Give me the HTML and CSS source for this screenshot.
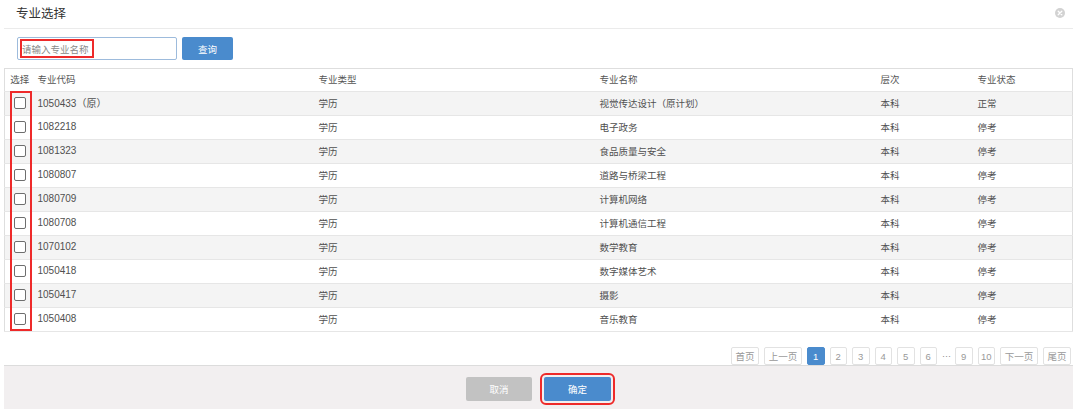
FILE: index.html
```html
<!DOCTYPE html>
<html>
  <head>
    <meta charset="UTF-8">
    <title>专业选择</title>
    <link rel="stylesheet" href="styles.css">
  </head>
  <body>
    <div class="dialog">
      <div class="dialog-header">
        <span class="dialog-title">专业选择</span>
        <span class="close-btn">
          <svg width="10" height="10" viewBox="0 0 10 10">
            <circle cx="5" cy="5" r="5" fill="#d2d2d2"/>
            <path d="M3.2 3.2 L6.8 6.8 M6.8 3.2 L3.2 6.8" stroke="#fff" stroke-width="1.3" stroke-linecap="round"/>
          </svg>
        </span>
      </div>

      <div class="search-bar">
        <div class="search-input">
          <input type="text" placeholder="请输入专业名称">
          <span class="mark mark-input"></span>
        </div>
        <button class="btn btn-primary btn-search">查询</button>
      </div>

      <div class="table-wrap">
        <table class="major-table">
          <colgroup>
            <col class="col-check">
            <col class="col-code">
            <col class="col-type">
            <col class="col-name">
            <col class="col-level">
            <col class="col-status">
          </colgroup>
          <thead>
            <tr>
              <th class="cell-check">选择</th>
              <th>专业代码</th>
              <th>专业类型</th>
              <th>专业名称</th>
              <th>层次</th>
              <th>专业状态</th>
            </tr>
          </thead>
          <tbody>
            <tr>
              <td class="cell-check"><span class="checkbox"></span></td>
              <td class="code">1050433（原）</td>
              <td>学历</td>
              <td>视觉传达设计（原计划）</td>
              <td>本科</td>
              <td>正常</td>
            </tr>
            <tr>
              <td class="cell-check"><span class="checkbox"></span></td>
              <td class="code">1082218</td>
              <td>学历</td>
              <td>电子政务</td>
              <td>本科</td>
              <td>停考</td>
            </tr>
            <tr>
              <td class="cell-check"><span class="checkbox"></span></td>
              <td class="code">1081323</td>
              <td>学历</td>
              <td>食品质量与安全</td>
              <td>本科</td>
              <td>停考</td>
            </tr>
            <tr>
              <td class="cell-check"><span class="checkbox"></span></td>
              <td class="code">1080807</td>
              <td>学历</td>
              <td>道路与桥梁工程</td>
              <td>本科</td>
              <td>停考</td>
            </tr>
            <tr>
              <td class="cell-check"><span class="checkbox"></span></td>
              <td class="code">1080709</td>
              <td>学历</td>
              <td>计算机网络</td>
              <td>本科</td>
              <td>停考</td>
            </tr>
            <tr>
              <td class="cell-check"><span class="checkbox"></span></td>
              <td class="code">1080708</td>
              <td>学历</td>
              <td>计算机通信工程</td>
              <td>本科</td>
              <td>停考</td>
            </tr>
            <tr>
              <td class="cell-check"><span class="checkbox"></span></td>
              <td class="code">1070102</td>
              <td>学历</td>
              <td>数学教育</td>
              <td>本科</td>
              <td>停考</td>
            </tr>
            <tr>
              <td class="cell-check"><span class="checkbox"></span></td>
              <td class="code">1050418</td>
              <td>学历</td>
              <td>数字媒体艺术</td>
              <td>本科</td>
              <td>停考</td>
            </tr>
            <tr>
              <td class="cell-check"><span class="checkbox"></span></td>
              <td class="code">1050417</td>
              <td>学历</td>
              <td>摄影</td>
              <td>本科</td>
              <td>停考</td>
            </tr>
            <tr>
              <td class="cell-check"><span class="checkbox"></span></td>
              <td class="code">1050408</td>
              <td>学历</td>
              <td>音乐教育</td>
              <td>本科</td>
              <td>停考</td>
            </tr>
          </tbody>
        </table>
        <span class="mark mark-checks"></span>
      </div>

      <div class="pager">
        <a class="page-btn page-wide">首页</a>
        <a class="page-btn page-wider">上一页</a>
        <a class="page-btn active">1</a>
        <a class="page-btn">2</a>
        <a class="page-btn">3</a>
        <a class="page-btn">4</a>
        <a class="page-btn">5</a>
        <a class="page-btn">6</a>
        <span class="page-dots">···</span>
        <a class="page-btn">9</a>
        <a class="page-btn">10</a>
        <a class="page-btn page-wider">下一页</a>
        <a class="page-btn page-wide">尾页</a>
      </div>

      <div class="dialog-footer">
        <button class="btn btn-cancel">取消</button>
        <button class="btn btn-primary btn-ok">确定</button>
      </div>
    </div>
  </body>
</html>
```

FILE: styles.css
```css
:root {
  --primary-color: #4a8bcd;
  --border-color: #dedede;
  --line-color: #e6e6e6;
  --text-color: #505050;
  --mark-color: #ee2a2a;
}

body {
  margin: 0;
  background: #ffffff;
  font-family: "Liberation Sans", "Noto Sans CJK SC", sans-serif;
  color: var(--text-color);
}

.dialog {
  margin: 0 6px 0 4px;
  height: 409px;
  display: flex;
  flex-direction: column;
}

.dialog > * {
  flex-shrink: 0;
}

.dialog-header {
  height: 28px;
  border-bottom: 1px solid #ebebeb;
  display: flex;
  align-items: center;
  justify-content: space-between;
  padding: 0 8px 0 12px;
}

.dialog-title {
  font-size: 12.5px;
  color: #333333;
  margin-top: -4px;
}

.close-btn {
  display: flex;
  margin-top: -2px;
}

.search-bar {
  display: flex;
  align-items: center;
  gap: 5px;
  padding: 8px 0 0 13px;
}

.search-input {
  position: relative;
  width: 160px;
  height: 23px;
  box-sizing: border-box;
  border: 1px solid #9dbbdc;
  border-radius: 2px;
  background: #fff;
}

.search-input input {
  border: none;
  outline: none;
  width: 100%;
  height: 100%;
  box-sizing: border-box;
  padding: 0 4px;
  font-family: "Noto Sans CJK SC", sans-serif;
  font-size: 9.5px;
  background: transparent;
}

.search-input input::placeholder {
  color: #8a8a8a;
}

.mark {
  position: absolute;
  border: 2px solid var(--mark-color);
  box-sizing: border-box;
  pointer-events: none;
}

.mark-input {
  left: 2px;
  top: 1px;
  width: 74px;
  height: 19px;
}

.btn {
  border: none;
  border-radius: 2px;
  color: #ffffff;
  font-family: "Noto Sans CJK SC", sans-serif;
  font-size: 9.5px;
  cursor: pointer;
  padding: 0;
}

.btn-primary {
  background: var(--primary-color);
}

.btn-search {
  width: 51px;
  height: 23px;
}

.table-wrap {
  position: relative;
  margin-top: 8px;
}

.major-table {
  width: 1069px;
  border-collapse: collapse;
  table-layout: fixed;
  border: 1px solid var(--border-color);
  font-size: 9.5px;
}

.col-check { width: 30px; }
.col-code { width: 281px; }
.col-type { width: 281px; }
.col-name { width: 281px; }
.col-level { width: 97px; }

.major-table th,
.major-table td {
  height: 21px;
  padding: 0 0 2px 3px;
  text-align: left;
  font-weight: normal;
  white-space: nowrap;
  border-bottom: 1px solid var(--line-color);
}

.major-table th {
  height: 20px;
  color: #555;
}

.major-table td.code {
  font-size: 10px;
}

.major-table .cell-check {
  padding: 0 0 2px 0;
  text-align: center;
}

.major-table tbody tr:nth-child(odd) {
  background: #f4f4f4;
}

.checkbox {
  display: inline-block;
  width: 10px;
  height: 10px;
  border: 1px solid #6e6e6e;
  border-radius: 2px;
  background: #fff;
  vertical-align: middle;
}

.mark-checks {
  left: 6px;
  top: 23px;
  width: 22px;
  height: 240px;
}

.pager {
  display: flex;
  justify-content: flex-end;
  align-items: center;
  gap: 5px;
  padding: 15px 2px 0 0;
  height: 18px;
}

.page-btn {
  box-sizing: border-box;
  height: 18px;
  width: 17.5px;
  border: 1px solid #e2e2e2;
  border-radius: 2px;
  display: flex;
  align-items: center;
  justify-content: center;
  font-size: 9.5px;
  white-space: nowrap;
  color: #999999;
  background: #fff;
}

.page-wide { width: 28px; }
.page-wider { width: 38px; }

.page-btn.active {
  background: var(--primary-color);
  border-color: var(--primary-color);
  color: #ffffff;
}

.page-dots {
  font-size: 9px;
  color: #888;
  width: 8px;
  text-align: center;
}

.dialog-footer {
  flex: 1 0 auto;
  background: #f2eff0;
  border-top: 1px solid #dcdcdc;
  display: flex;
  justify-content: center;
  align-items: flex-start;
  gap: 12px;
  padding-top: 11px;
}

.btn-cancel {
  width: 66px;
  height: 24px;
  background: #c2c2c2;
}

.btn-ok {
  width: 67px;
  height: 24px;
  outline: 2px solid var(--mark-color);
  outline-offset: 2px;
}
```
